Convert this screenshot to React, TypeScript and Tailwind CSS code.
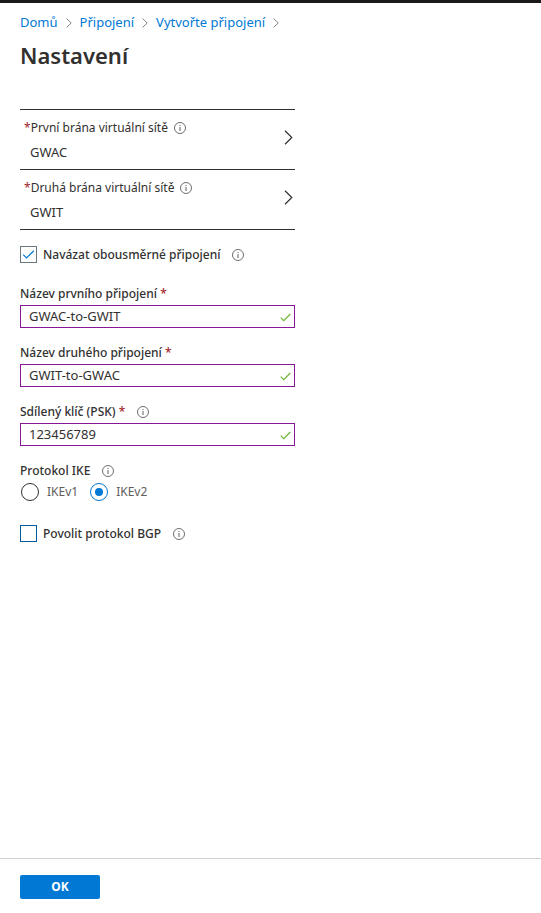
import React, { useState } from 'react';

interface GatewayRowProps {
  label: string;
  value: string;
}

interface TextFieldProps {
  id: string;
  label: string;
  defaultValue: string;
  info?: boolean;
}

interface CheckFieldProps {
  id: string;
  label: string;
  defaultChecked?: boolean;
  boxClass: string;
}

const BREADCRUMBS = ['Domů', 'Připojení', 'Vytvořte připojení'];
const IKE_VERSIONS = ['IKEv1', 'IKEv2'];

const InfoIcon: React.FC = () => (
  <svg width="12" height="12" viewBox="0 0 12 12" className="shrink-0 text-[#605e5c]" aria-hidden="true">
    <circle cx="6" cy="6" r="5.5" fill="none" stroke="currentColor" strokeWidth="0.9" />
    <path d="M5.5 5h1v4h-1zM5.5 3h1v1h-1z" fill="currentColor" />
  </svg>
);

const Required: React.FC = () => <span className="text-[#a4262c]">*</span>;

const GatewayRow: React.FC<GatewayRowProps> = ({ label, value }) => (
  <button type="button" className="flex w-full items-center border-b border-[#323130] py-2 pr-0.5 pl-1 text-left">
    <span className="flex-1">
      <span className="flex h-5 items-center gap-1.5 text-xs">
        <span><Required />{label}</span>
        <InfoIcon />
      </span>
      <span className="mt-1 block h-[19px] pl-1.5 text-[13px] leading-5">{value}</span>
    </span>
    <svg width="9" height="15" viewBox="0 0 9 15" className="mb-1" aria-hidden="true">
      <path d="M1 0.8 7.8 7.5 1 14.2" fill="none" stroke="#323130" strokeWidth="1.2" />
    </svg>
  </button>
);

const TextField: React.FC<TextFieldProps> = ({ id, label, defaultValue, info = false }) => (
  <div>
    <div className="flex h-[21px] items-start gap-3 text-xs leading-5 font-medium">
      <label htmlFor={id}>{label} <Required /></label>
      {info && <span className="flex h-5 items-center"><InfoIcon /></span>}
    </div>
    <div className="flex h-[23px] items-center border border-[#881798] pr-[3px]">
      <input
        id={id}
        type="text"
        defaultValue={defaultValue}
        className="min-w-0 flex-1 bg-transparent pl-2 text-[13px] outline-none"
      />
      <svg width="11" height="9" viewBox="0 0 11 9" className="mt-0.5" aria-hidden="true">
        <path d="M0.7 4.7 3.7 7.7 10.3 1" fill="none" stroke="#6bb12f" strokeWidth="1.1" />
      </svg>
    </div>
  </div>
);

const CheckField: React.FC<CheckFieldProps> = ({ id, label, defaultChecked = false, boxClass }) => (
  <div className="flex h-[17px] items-center">
    <span className="relative size-[17px]">
      <input
        id={id}
        type="checkbox"
        defaultChecked={defaultChecked}
        className={`peer block size-[17px] appearance-none border bg-white ${boxClass}`}
      />
      <svg
        width="17"
        height="17"
        viewBox="0 0 17 17"
        className="pointer-events-none absolute inset-0 hidden peer-checked:block"
        aria-hidden="true"
      >
        <path d="M3.2 8.7 6.5 12 13.8 4.8" fill="none" stroke="#0078d4" strokeWidth="1.2" />
      </svg>
    </span>
    <label htmlFor={id} className="mr-3 ml-1.5 text-xs font-medium">{label}</label>
    <InfoIcon />
  </div>
);

export default function App() {
  const [ikeVersion, setIkeVersion] = useState('IKEv2');

  return (
    <div className="flex min-h-screen flex-col border-t-[3px] border-[#1b1a19] bg-white font-['Noto_Sans','Open_Sans',sans-serif] text-[#323130]">
      <header className="px-5 pt-[9px]">
        <nav className="flex h-[22px] items-center gap-2 text-[13px] text-[#0078d4]">
          {BREADCRUMBS.map(crumb => (
            <React.Fragment key={crumb}>
              <a href="#">{crumb}</a>
              <svg width="6" height="10" viewBox="0 0 6 10" aria-hidden="true">
                <path d="M0.6 0.6 5.2 5 0.6 9.4" fill="none" stroke="#8a8886" strokeWidth="1" />
              </svg>
            </React.Fragment>
          ))}
        </nav>
        <h1 className="mt-[3px] text-[22px] leading-9 font-semibold">Nastavení</h1>
      </header>

      <main className="mt-9 w-full max-w-[315px] px-5">
        <div className="border-t border-[#323130]">
          <GatewayRow label="První brána virtuální sítě" value="GWAC" />
          <GatewayRow label="Druhá brána virtuální sítě" value="GWIT" />
        </div>

        <div className="mt-4">
          <CheckField id="bidirectional" label="Navázat obousměrné připojení" defaultChecked boxClass="border-[#69797e]" />
        </div>

        <div className="mt-[21px] flex flex-col gap-[15px]">
          <TextField id="first-name" label="Název prvního připojení" defaultValue="GWAC-to-GWIT" />
          <TextField id="second-name" label="Název druhého připojení" defaultValue="GWIT-to-GWAC" />
          <TextField id="psk" label="Sdílený klíč (PSK)" defaultValue="123456789" info />
        </div>

        <fieldset className="mt-[15px]">
          <legend className="flex h-[22px] gap-3 text-xs leading-5 font-medium">
            Protokol IKE
            <span className="flex h-5 items-center"><InfoIcon /></span>
          </legend>
          <div className="flex h-[18px] items-center gap-3 pl-px">
            {IKE_VERSIONS.map(version => (
              <label key={version} className="flex items-center gap-2 text-xs text-[#605e5c]">
                <input
                  type="radio"
                  name="ike"
                  value={version}
                  checked={ikeVersion === version}
                  onChange={() => setIkeVersion(version)}
                  className="size-[18px] appearance-none rounded-full border border-[#323130] bg-white checked:border-[#0078d4] checked:bg-[#0078d4] checked:bg-clip-content checked:p-1"
                />
                {version}
              </label>
            ))}
          </div>
        </fieldset>

        <div className="mt-6">
          <CheckField id="bgp" label="Povolit protokol BGP" boxClass="border-[#005a9e]" />
        </div>
      </main>

      <footer className="mt-auto border-t border-[#d2d0ce] px-5 pt-4 pb-3.5">
        <button type="button" className="block h-6 w-20 rounded-xs bg-[#0078d4] text-xs font-bold text-white">
          OK
        </button>
      </footer>
    </div>
  );
}
